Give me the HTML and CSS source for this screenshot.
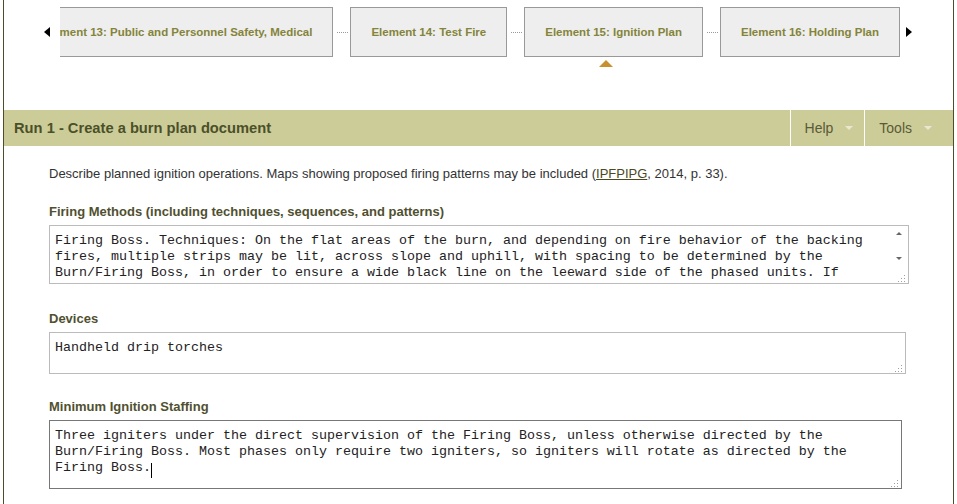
FILE: index.html
```html
<!DOCTYPE html>
<html lang="en">
<head>
<meta charset="utf-8">
<title>Run 1 - Create a burn plan document</title>
<link rel="stylesheet" href="styles.css">
</head>
<body>
<div class="page">
  <nav class="steps">
    <span class="arrow arrow-left"></span>
    <div class="steps-viewport">
      <div class="steps-track">
        <a class="step" href="#">Element 13: Public and Personnel Safety, Medical</a>
        <span class="link"></span>
        <a class="step" href="#">Element 14: Test Fire</a>
        <span class="link"></span>
        <a class="step step-active" href="#">Element 15: Ignition Plan</a>
        <span class="link"></span>
        <a class="step" href="#">Element 16: Holding Plan</a>
      </div>
    </div>
    <span class="arrow arrow-right"></span>
  </nav>

  <header class="bar">
    <h1 class="bar-title">Run 1 - Create a burn plan document</h1>
    <div class="bar-menu">
      <span class="bar-item">Help<span class="caret"></span></span>
      <span class="bar-item bar-item-last">Tools<span class="caret"></span></span>
    </div>
  </header>

  <main class="content">
    <p class="intro">Describe planned ignition operations. Maps showing proposed firing patterns may be included (<a class="ref" href="#">IPFPIPG</a>, 2014, p. 33).</p>

    <div class="field field-first">
      <label class="field-label" for="methods">Firing Methods (including techniques, sequences, and patterns)</label>
      <div class="box box-methods">
        <textarea id="methods" class="input input-scroll">Firing Boss. Techniques: On the flat areas of the burn, and depending on fire behavior of the backing fires, multiple strips may be lit, across slope and uphill, with spacing to be determined by the Burn/Firing Boss, in order to ensure a wide black line on the leeward side of the phased units. If</textarea>
        <span class="scroll-up"></span>
        <span class="scroll-down"></span>
        <svg class="grip" width="8" height="8" viewBox="0 0 8 8"><rect x="7" y="1" width="1" height="1"/><rect x="4" y="4" width="1" height="1"/><rect x="7" y="4" width="1" height="1"/><rect x="1" y="7" width="1" height="1"/><rect x="4" y="7" width="1" height="1"/><rect x="7" y="7" width="1" height="1"/></svg>
      </div>
    </div>

    <div class="field field-second">
      <label class="field-label" for="devices">Devices</label>
      <div class="box box-devices">
        <textarea id="devices" class="input">Handheld drip torches</textarea>
        <svg class="grip" width="8" height="8" viewBox="0 0 8 8"><rect x="7" y="1" width="1" height="1"/><rect x="4" y="4" width="1" height="1"/><rect x="7" y="4" width="1" height="1"/><rect x="1" y="7" width="1" height="1"/><rect x="4" y="7" width="1" height="1"/><rect x="7" y="7" width="1" height="1"/></svg>
      </div>
    </div>

    <div class="field field-third">
      <label class="field-label" for="staffing">Minimum Ignition Staffing</label>
      <div class="box box-staffing">
        <textarea id="staffing" class="input input-focus">Three igniters under the direct supervision of the Firing Boss, unless otherwise directed by the Burn/Firing Boss. Most phases only require two igniters, so igniters will rotate as directed by the Firing Boss.</textarea>
        <span class="caret-line"></span>
        <svg class="grip" width="8" height="8" viewBox="0 0 8 8"><rect x="7" y="1" width="1" height="1"/><rect x="4" y="4" width="1" height="1"/><rect x="7" y="4" width="1" height="1"/><rect x="1" y="7" width="1" height="1"/><rect x="4" y="7" width="1" height="1"/><rect x="7" y="7" width="1" height="1"/></svg>
      </div>
    </div>
  </main>
</div>
</body>
</html>
```

FILE: styles.css
```css
html, body {
  margin: 0;
  padding: 0;
  overflow: hidden;
  background: #fff;
}

body {
  font-family: "Liberation Sans", Arial, sans-serif;
  font-size: 13px;
  color: #333;
}

.page {
  margin-left: 3px;
  width: 951px;
  height: 504px;
  box-sizing: border-box;
  border-left: 1px solid #4d4d2e;
  border-right: 1px solid #4d4d2e;
}

/* ---------- step navigation ---------- */
.steps {
  display: flex;
  align-items: flex-start;
  height: 110px;
  box-sizing: border-box;
  padding: 7px 0 0 40px;
}

.arrow {
  width: 0;
  height: 0;
  margin-top: 20px;
  border-top: 5px solid transparent;
  border-bottom: 5px solid transparent;
}

.arrow-left {
  border-right: 6px solid #000;
}

.arrow-right {
  margin-left: 6px;
  border-left: 6px solid #000;
}

.steps-viewport {
  width: 840px;
  height: 62px;
  margin-left: 10px;
  overflow: hidden;
  display: flex;
  justify-content: flex-end;
}

.steps-track {
  display: flex;
  flex-shrink: 0;
  align-items: flex-start;
}

.step {
  position: relative;
  flex-shrink: 0;
  display: flex;
  align-items: center;
  height: 50px;
  box-sizing: border-box;
  padding: 0 20px;
  background: #eee;
  border: 1px solid #999;
  color: #84843a;
  font-weight: bold;
  font-size: 11.5px;
  white-space: nowrap;
  text-decoration: none;
}

.step-active::after {
  content: "";
  position: absolute;
  top: 52px;
  left: 74px;
  width: 0;
  height: 0;
  border-left: 7px solid transparent;
  border-right: 7px solid transparent;
  border-bottom: 7px solid #c8912e;
}

.link {
  flex-shrink: 0;
  width: 17px;
  height: 50px;
  display: flex;
  align-items: center;
}

.link::before {
  content: "";
  flex: 1;
  margin: 0 2px 0 4px;
  border-top: 1px dotted #999;
}

/* ---------- header bar ---------- */
.bar {
  display: flex;
  align-items: stretch;
  height: 36px;
  background: #cccc99;
}

.bar-title {
  flex: 1;
  margin: 0;
  padding-left: 10px;
  display: flex;
  align-items: center;
  font-size: 14.7px;
  font-weight: bold;
  color: #4b5028;
}

.bar-menu {
  display: flex;
  margin-right: 11px;
}

.bar-item {
  display: flex;
  align-items: center;
  padding: 0 11px 0 14px;
  border-left: 1px solid #fff;
  font-size: 14px;
  color: #5a5a36;
}

.bar-item-last {
  padding-right: 10px;
}

.caret {
  width: 0;
  height: 0;
  margin-left: 12px;
  border-left: 4px solid transparent;
  border-right: 4px solid transparent;
  border-top: 4px solid #e8e8d2;
}

/* ---------- content ---------- */
.content {
  padding: 20px 0 0 45px;
}

.intro {
  margin: 0;
  line-height: 16px;
  font-size: 13px;
  color: #333;
}

.ref {
  color: #4a4a1e;
  text-decoration: underline;
}

.field-first {
  margin-top: 22px;
}

.field-second {
  margin-top: 27px;
}

.field-third {
  margin-top: 25px;
}

.field-label {
  display: block;
  margin-bottom: 5px;
  line-height: 16px;
  font-weight: bold;
  font-size: 13px;
  color: #505030;
}

.box {
  position: relative;
}

.box-methods { width: 860px; }
.box-devices { width: 857px; }
.box-staffing { width: 853px; }

.input {
  display: block;
  width: 100%;
  margin: 0;
  box-sizing: border-box;
  padding: 7px 5px 3px 5px;
  border: 1px solid #bbb;
  border-radius: 0;
  resize: none;
  overflow: hidden;
  outline: none;
  background: #fff;
  font-family: "Liberation Mono", "Courier New", monospace;
  font-size: 13.333px;
  line-height: 16px;
  color: #222;
}

.box-methods .input { height: 59px; padding-right: 22px; }
.box-devices .input { height: 42px; }
.box-staffing .input { height: 69px; }

.input-focus {
  border-color: #777;
}

.scroll-up,
.scroll-down {
  position: absolute;
  right: 7px;
  width: 0;
  height: 0;
  border-left: 3px solid transparent;
  border-right: 3px solid transparent;
}

.scroll-up {
  top: 7px;
  border-bottom: 3px solid #666;
}

.scroll-down {
  top: 32px;
  border-top: 3px solid #666;
}

.grip {
  position: absolute;
  right: 4px;
  bottom: 2px;
  fill: #a0a0a0;
}

.caret-line {
  position: absolute;
  left: 102px;
  top: 43px;
  width: 1px;
  height: 15px;
  background: #000;
}
```
